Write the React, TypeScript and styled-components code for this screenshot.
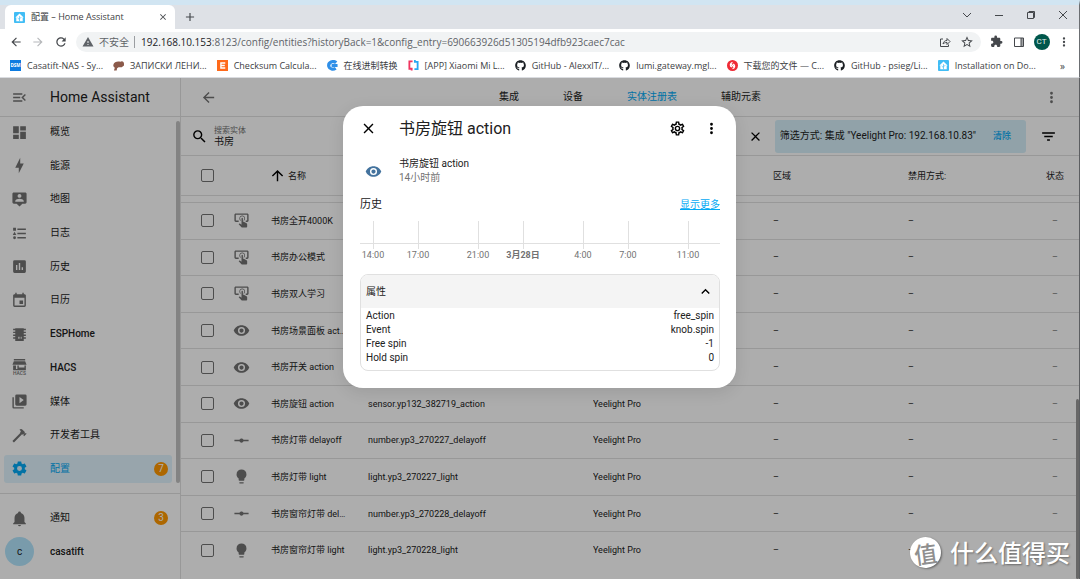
import React from 'react';
import styled, { createGlobalStyle } from 'styled-components';
import { FaGithub } from 'react-icons/fa';
import { MdExtension, MdWarning, MdStarOutline, MdRefresh } from 'react-icons/md';

const GlobalStyle = createGlobalStyle`
  *, *::before, *::after { box-sizing: border-box; }
  body { margin: 0; font-family: Roboto, "Noto Sans CJK SC", sans-serif; color: #212121; }
  button, input { font: inherit; color: inherit; }
  button { border: 0; padding: 0; background: none; cursor: pointer; }
  a { color: inherit; text-decoration: none; }
  ul { list-style: none; margin: 0; padding: 0; }
`;

const paths = {
  menuOpen: 'M21,15.61L19.59,17L14.58,12L19.59,7L21,8.39L17.44,12L21,15.61M3,6H16V8H3V6M3,13V11H13V13H3M3,18V16H16V18H3Z',
  dashboard: 'M13,3V9H21V3M13,21H21V11H13M3,21H11V15H3M3,13H11V3H3V13Z',
  bolt: 'M11 15H6L13 1V9H18L11 23V15Z',
  mapAccount: 'M20 2H4C2.9 2 2 2.9 2 4V16C2 17.1 2.9 18 4 18H8L12 22L16 18H20C21.1 18 22 17.1 22 16V4C22 2.9 21.1 2 20 2M12 4.3C13.5 4.3 14.7 5.5 14.7 7S13.5 9.7 12 9.7 9.3 8.5 9.3 7 10.5 4.3 12 4.3M18 15H6V14.1C6 12.1 10 11 12 11S18 12.1 18 14.1V15Z',
  list: 'M5,9.5L7.5,14H2.5L5,9.5M3,4H7V8H3V4M5,20A2,2 0 0,0 7,18A2,2 0 0,0 5,16A2,2 0 0,0 3,18A2,2 0 0,0 5,20M9,5V7H21V5H9M9,19H21V17H9V19M9,13H21V11H9V13Z',
  chart: 'M9 17H7V10H9M13 17H11V7H13M17 17H15V13H17M19 3H5A2 2 0 0 0 3 5V19A2 2 0 0 0 5 21H19A2 2 0 0 0 21 19V5A2 2 0 0 0 19 3Z',
  calendar: 'M19,19H5V8H19M16,1V3H8V1H6V3H5C3.89,3 3,3.89 3,5V19A2,2 0 0,0 5,21H19A2,2 0 0,0 21,19V5C21,3.89 20.1,3 19,3H18V1M17,12H12V17H17V12Z',
  chip: 'M6,3H18V4H21V6H18V8H21V10H18V12H21V14H18V16H21V18H18V21H6V18H3V16H6V14H3V12H6V10H3V8H6V6H3V4H6V3M10,15V18H11V15H10M12,15V18H13V15H12M14,15V18H15V15H14Z',
  hacs: 'M4,0H20V2H4ZM4,3H20L22,8H2ZM3,9H7V14H3ZM19,9H21V16H9V9H11V12H19V9ZM3,14H9V16H3Z',
  media: 'M4,6H2V20A2,2 0 0,0 4,22H18V20H4V6M20,2H8A2,2 0 0,0 6,4V16A2,2 0 0,0 8,18H20A2,2 0 0,0 22,16V4A2,2 0 0,0 20,2M12,14.5V5.5L18,10L12,14.5Z',
  hammer: 'M2,19.63L13.43,8.2L12.72,7.5L14.14,6.07L12,3.89C13.2,2.7 15.09,2.7 16.27,3.89L19.87,7.5L18.45,8.91H21.29L22,9.62L18.45,13.21L17.74,12.5V9.62L16.27,11.04L15.56,10.33L4.13,21.76L2,19.63Z',
  cog: 'M12,15.5A3.5,3.5 0 0,1 8.5,12A3.5,3.5 0 0,1 12,8.5A3.5,3.5 0 0,1 15.5,12A3.5,3.5 0 0,1 12,15.5M19.43,12.97C19.47,12.65 19.5,12.33 19.5,12C19.5,11.67 19.47,11.34 19.43,11L21.54,9.37C21.73,9.22 21.78,8.95 21.66,8.73L19.66,5.27C19.54,5.05 19.27,4.96 19.05,5.05L16.56,6.05C16.04,5.66 15.5,5.32 14.87,5.07L14.5,2.42C14.46,2.18 14.25,2 14,2H10C9.75,2 9.54,2.18 9.5,2.42L9.13,5.07C8.5,5.32 7.96,5.66 7.44,6.05L4.95,5.05C4.73,4.96 4.46,5.05 4.34,5.27L2.34,8.73C2.21,8.95 2.27,9.22 2.46,9.37L4.57,11C4.53,11.34 4.5,11.67 4.5,12C4.5,12.33 4.53,12.65 4.57,12.97L2.46,14.63C2.27,14.78 2.21,15.05 2.34,15.27L4.34,18.73C4.46,18.95 4.73,19.03 4.95,18.95L7.44,17.94C7.96,18.34 8.5,18.68 9.13,18.93L9.5,21.58C9.54,21.82 9.75,22 10,22H14C14.25,22 14.46,21.82 14.5,21.58L14.87,18.93C15.5,18.67 16.04,18.34 16.56,17.94L19.05,18.95C19.27,19.03 19.54,18.95 19.66,18.73L21.66,15.27C21.78,15.05 21.73,14.78 21.54,14.63L19.43,12.97Z',
  bell: 'M21,19V20H3V19L5,17V11C5,7.9 7.03,5.17 10,4.29C10,4.19 10,4.1 10,4A2,2 0 0,1 12,2A2,2 0 0,1 14,4C14,4.1 14,4.19 14,4.29C16.97,5.17 19,7.9 19,11V17L21,19M14,21A2,2 0 0,1 12,23A2,2 0 0,1 10,21',
  magnify: 'M9.5,3A6.5,6.5 0 0,1 16,9.5C16,11.11 15.41,12.59 14.44,13.73L14.71,14H15.5L20.5,19L19,20.5L14,15.5V14.71L13.73,14.44C12.59,15.41 11.11,16 9.5,16A6.5,6.5 0 0,1 3,9.5A6.5,6.5 0 0,1 9.5,3M9.5,5C7,5 5,7 5,9.5C5,12 7,14 9.5,14C12,14 14,12 14,9.5C14,7 12,5 9.5,5Z',
  arrowLeft: 'M20,11V13H8L13.5,18.5L12.08,19.92L4.16,12L12.08,4.08L13.5,5.5L8,11H20Z',
  arrowRight: 'M4,11V13H16L10.5,18.5L11.92,19.92L19.84,12L11.92,4.08L10.5,5.5L16,11H4Z',
  arrowUp: 'M13,20H11V8L5.5,13.5L4.08,12.08L12,4.16L19.92,12.08L18.5,13.5L13,8V20Z',
  dots: 'M12,16A2,2 0 0,1 14,18A2,2 0 0,1 12,20A2,2 0 0,1 10,18A2,2 0 0,1 12,16M12,10A2,2 0 0,1 14,12A2,2 0 0,1 12,14A2,2 0 0,1 10,12A2,2 0 0,1 12,10M12,4A2,2 0 0,1 14,6A2,2 0 0,1 12,8A2,2 0 0,1 10,6A2,2 0 0,1 12,4Z',
  close: 'M19,6.41L17.59,5L12,10.59L6.41,5L5,6.41L10.59,12L5,17.59L6.41,19L12,13.41L17.59,19L19,17.59L13.41,12L19,6.41Z',
  plus: 'M19,13H13V19H11V13H5V11H11V5H13V11H19V13Z',
  filter: 'M6,13H18V11H6M3,6V8H21V6M10,18H14V16H10V18Z',
  eye: 'M12,9A3,3 0 0,0 9,12A3,3 0 0,0 12,15A3,3 0 0,0 15,12A3,3 0 0,0 12,9M12,17A5,5 0 0,1 7,12A5,5 0 0,1 12,7A5,5 0 0,1 17,12A5,5 0 0,1 12,17M12,4.5C7,4.5 2.73,7.61 1,12C2.73,16.39 7,19.5 12,19.5C17,19.5 21.27,16.39 23,12C21.27,7.61 17,4.5 12,4.5Z',
  tap: 'M13 5C15.21 5 17 6.79 17 9C17 10.5 16.2 11.77 15 12.46V11.24C15.61 10.69 16 9.89 16 9C16 7.34 14.66 6 13 6S10 7.34 10 9C10 9.89 10.39 10.69 11 11.24V12.46C9.8 11.77 9 10.5 9 9C9 6.79 10.79 5 13 5M20 20.5C19.97 21.32 19.32 21.97 18.5 22H13C12.62 22 12.26 21.85 12 21.57L8 17.37L8.74 16.6C8.93 16.39 9.2 16.28 9.5 16.28H9.7L12 18V9C12 8.45 12.45 8 13 8S14 8.45 14 9V13.47L15.21 13.6L19.15 15.79C19.68 16.03 20 16.56 20 17.14V20.5M20 2H4C2.9 2 2 2.9 2 4V12C2 13.11 2.9 14 4 14H8V12L4 12L4 4H20L20 12H18V14H20V13.99L20.04 14C21.13 14 22 13.09 22 12V4C22 2.9 21.1 2 20 2Z',
  ray: 'M2,11H9.17C9.58,9.83 10.69,9 12,9C13.31,9 14.42,9.83 14.83,11H22V13H14.83C14.42,14.17 13.31,15 12,15C10.69,15 9.58,14.17 9.17,13H2V11Z',
  bulb: 'M12,2A7,7 0 0,0 5,9C5,11.38 6.19,13.47 8,14.74V17A1,1 0 0,0 9,18H15A1,1 0 0,0 16,17V14.74C17.81,13.47 19,11.38 19,9A7,7 0 0,0 12,2M9,21A1,1 0 0,0 10,22H14A1,1 0 0,0 15,21V20H9V21Z',
  cogOutline: 'M12,8A4,4 0 0,1 16,12A4,4 0 0,1 12,16A4,4 0 0,1 8,12A4,4 0 0,1 12,8M12,10A2,2 0 0,0 10,12A2,2 0 0,0 12,14A2,2 0 0,0 14,12A2,2 0 0,0 12,10M10,22C9.75,22 9.54,21.82 9.5,21.58L9.13,18.93C8.5,18.68 7.96,18.34 7.44,17.94L4.95,18.95C4.73,19.03 4.46,18.95 4.34,18.73L2.34,15.27C2.21,15.05 2.27,14.78 2.46,14.63L4.57,12.97L4.5,12L4.57,11L2.46,9.37C2.27,9.22 2.21,8.95 2.34,8.73L4.34,5.27C4.46,5.05 4.73,4.96 4.95,5.05L7.44,6.05C7.96,5.66 8.5,5.32 9.13,5.07L9.5,2.42C9.54,2.18 9.75,2 10,2H14C14.25,2 14.46,2.18 14.5,2.42L14.87,5.07C15.5,5.32 16.04,5.66 16.56,6.05L19.05,5.05C19.27,4.96 19.54,5.05 19.66,5.27L21.66,8.73C21.79,8.95 21.73,9.22 21.54,9.37L19.43,11L19.5,12L19.43,13L21.54,14.63C21.73,14.78 21.79,15.05 21.66,15.27L19.66,18.73C19.54,18.95 19.27,19.04 19.05,18.95L16.56,17.95C16.04,18.34 15.5,18.68 14.87,18.93L14.5,21.58C14.46,21.82 14.25,22 14,22H10M11.25,4L10.88,6.61C9.68,6.86 8.62,7.5 7.85,8.39L5.44,7.35L4.69,8.65L6.8,10.2C6.4,11.37 6.4,12.64 6.8,13.8L4.68,15.36L5.43,16.66L7.86,15.62C8.63,16.5 9.68,17.14 10.87,17.38L11.24,20H12.76L13.13,17.39C14.32,17.14 15.37,16.5 16.14,15.62L18.57,16.66L19.32,15.36L17.2,13.81C17.6,12.64 17.6,11.37 17.2,10.2L19.31,8.65L18.56,7.35L16.15,8.39C15.38,7.5 14.32,6.86 13.12,6.62L12.75,4H11.25Z',
  chevronUp: 'M7.41,15.41L12,10.83L16.59,15.41L18,14L12,8L6,14L7.41,15.41Z',
};
type IconName = keyof typeof paths;

const Svg = styled.svg<{ $size: number }>`
  display: block;
  flex: none;
  width: ${(p) => p.$size}px;
  height: ${(p) => p.$size}px;
  fill: currentColor;
  fill-rule: evenodd;
`;

const Icon = ({ name, size = 17 }: { name: IconName; size?: number }) => (
  <Svg $size={size} viewBox="0 0 24 24" aria-hidden="true">
    <path d={paths[name]} />
    {name === 'hacs' && (
      <text x="12" y="23" fontSize="7" fontWeight="500" textAnchor="middle">HACS</text>
    )}
  </Svg>
);

/* ---------- browser frame ---------- */

const Page = styled.div`
  position: relative;
  display: flex;
  flex-direction: column;
  min-height: 100vh;
  background: #fff;
`;

const Browser = styled.header`
  flex: none;
  font-family: "Open Sans", "Noto Sans CJK SC", sans-serif;
  line-height: 14px;
  color: #3c4043;
  background: #fff;
  border-top: 5px solid #d1e5f2;
  border-right: 1px solid #6b6e72;
  border-bottom: 1px solid #dadce0;
`;

const TabStrip = styled.div`
  display: flex;
  align-items: center;
  height: 24px;
  padding-left: 5px;
  background: #dee1e6;
`;

const BrowserTab = styled.div`
  display: flex;
  align-items: center;
  gap: 6px;
  width: 170px;
  height: 24px;
  padding: 0 6px 0 9px;
  border-radius: 6px 6px 0 0;
  background: #fff;
  font-size: 9px;
  white-space: nowrap;
`;

const TabTitle = styled.span`
  flex: 1;
`;

const FrameButton = styled.button<{ $width?: number; $faded?: boolean }>`
  display: flex;
  align-items: center;
  justify-content: center;
  flex: none;
  width: ${(p) => p.$width ?? 12}px;
  height: 20px;
  color: ${(p) => (p.$faded ? '#b6b8bb' : '#45484c')};
`;

const WindowButtons = styled.div`
  display: flex;
  margin-left: auto;
  height: 24px;
`;

const Toolbar = styled.div`
  display: flex;
  align-items: center;
  height: 25px;
  padding: 0 5px 0 4px;
`;

const AddressBar = styled.div`
  display: flex;
  align-items: center;
  flex: 1;
  min-width: 0;
  height: 20px;
  margin: 0 4px;
  padding: 0 3px 0 6px;
  border-radius: 10px;
  background: #f1f3f4;
  font-size: 10px;
  color: #5f6368;
`;

const Insecure = styled.span`
  flex: none;
  margin: 0 6px 0 5px;
  padding-right: 5px;
  border-right: 1px solid #9a9da1;
  line-height: 12px;
`;

const Url = styled.span`
  flex: 1;
  overflow: hidden;
  white-space: nowrap;
  b { font-weight: 400; color: #202124; }
`;

const Avatar = styled.span`
  display: flex;
  align-items: center;
  justify-content: center;
  width: 16px;
  height: 16px;
  border-radius: 50%;
  background: #00574b;
  color: #e5efed;
  font: 8px Roboto, sans-serif;
`;

const Bookmarks = styled.nav`
  display: flex;
  align-items: center;
  gap: 10px;
  height: 23px;
  padding: 0 14px 0 10px;
  overflow: hidden;
`;

const Bookmark = styled.a`
  display: flex;
  align-items: center;
  flex: none;
  gap: 6px;
  font-size: 9px;
  white-space: nowrap;
`;

const More = styled.button`
  margin-left: auto;
  font-size: 10px;
  line-height: 14px;
`;

const Favicon = ({ kind }: { kind: string }) => (
  <Svg $size={11} viewBox="0 0 24 24" aria-hidden="true">
    {kind === 'dsm' && (
      <>
        <rect width="24" height="24" fill="#0c7be0" />
        <text x="12" y="16" fontSize="10" fontWeight="700" textAnchor="middle" fill="#fff">DSM</text>
      </>
    )}
    {kind === 'brown' && <path fill="#8b5a4a" d="M1 10C2 3 12 2 16 4C20 1 24 4 24 8V12L19 16H12L9 18L8 23H2L4 17C1 15 0 13 1 10Z" />}
    {kind === 'e' && (
      <>
        <rect width="24" height="24" fill="#ff6a1a" />
        <path fill="#fff" d="M7 5H18V8H10V10.500H17V13.500H10V16H18V19H7Z" />
      </>
    )}
    {kind === 'c' && (
      <path fill="none" stroke="#2f8fe8" strokeWidth="7" d="M20 6C17 3 13 3 10 4C5 6 3 10 4 14C6 20 13 22 19 18M10 12H23" />
    )}
    {kind === 'app' && (
      <>
        <path fill="none" stroke="#f0355f" strokeWidth="4" d="M10 3H3V19H8V23" />
        <path fill="none" stroke="#2aa8f2" strokeWidth="4" d="M14 20H21V4H15V0" />
      </>
    )}
    {kind === 'red' && (
      <>
        <circle cx="12" cy="12" r="12" fill="#ef2b36" />
        <path fill="none" stroke="#fff" strokeWidth="3" d="M12 5C6 7 6 14 11 15M12 19C18 17 18 10 13 9M9 9L15 15" />
      </>
    )}
    {kind === 'ha' && (
      <>
        <rect width="24" height="24" rx="2" fill="#41bdf5" />
        <path fill="#fff" d="M12 3L21 12H19V20H5V12H3Z" />
        <path fill="none" stroke="#41bdf5" strokeWidth="1.500" d="M12 20V9M12 17L8 13M12 15L16 11" />
      </>
    )}
  </Svg>
);

const bookmarks = [
  ['dsm', 'Casatift-NAS - Sy...'],
  ['brown', 'ЗАПИСКИ ЛЕНИ...'],
  ['e', 'Checksum Calcula...'],
  ['c', '在线进制转换'],
  ['app', '[APP] Xiaomi Mi L...'],
  ['github', 'GitHub - AlexxIT/...'],
  ['github', 'lumi.gateway.mgl...'],
  ['red', '下载您的文件 — C...'],
  ['github', 'GitHub - psieg/Li...'],
  ['ha', 'Installation on Do...'],
];

const Line = ({ d, size = 12, w = 1 }: { d: string; size?: number; w?: number }) => (
  <Svg $size={size} viewBox="0 0 12 12" aria-hidden="true">
    <path d={d} fill="none" stroke="currentColor" strokeWidth={w} />
  </Svg>
);

const BrowserFrame = () => (
  <Browser>
    <TabStrip>
      <BrowserTab>
        <Favicon kind="ha" />
        <TabTitle>配置 – Home Assistant</TabTitle>
        <FrameButton aria-label="关闭标签页"><Icon name="close" size={10} /></FrameButton>
      </BrowserTab>
      <FrameButton $width={30} aria-label="新标签页"><Icon name="plus" size={14} /></FrameButton>
      <WindowButtons>
        <FrameButton $width={32} aria-label="搜索标签页"><Line d="M2 4L6 8L10 4" /></FrameButton>
        <FrameButton $width={32} aria-label="最小化"><Line d="M2 6.500H10" /></FrameButton>
        <FrameButton $width={32} aria-label="还原"><Line d="M2.500 3.500H8.500V9.500H2.500ZM4 3.500V2.500H9.500V8.500H8.500" /></FrameButton>
        <FrameButton $width={32} aria-label="关闭"><Line d="M2 2L10 10M10 2L2 10" /></FrameButton>
      </WindowButtons>
    </TabStrip>
    <Toolbar>
      <FrameButton $width={23} aria-label="后退"><Icon name="arrowLeft" size={14} /></FrameButton>
      <FrameButton $width={22} $faded aria-label="前进"><Icon name="arrowRight" size={14} /></FrameButton>
      <FrameButton $width={23} aria-label="重新加载"><MdRefresh size={14} /></FrameButton>
      <AddressBar>
        <MdWarning size={12} />
        <Insecure>不安全</Insecure>
        <Url><b>192.168.10.153</b>:8123/config/entities?historyBack=1&amp;config_entry=690663926d51305194dfb923caec7cac</Url>
        <FrameButton $width={22} aria-label="分享">
          <Line d="M4 3H1.500V10.500H9.500V8.500M4 8C4.500 5.500 6 4.500 8 4.500V2.500L11 5.500L8 8.500V6.500C6 6.500 5 7 4 8Z" />
        </FrameButton>
        <FrameButton $width={22} aria-label="收藏"><MdStarOutline size={14} /></FrameButton>
      </AddressBar>
      <FrameButton $width={23} aria-label="扩展程序"><MdExtension size={13} /></FrameButton>
      <FrameButton $width={22} aria-label="侧边栏">
        <Line d="M1.500 2H10.500V10.500H1.500ZM8 2V10M9 2V10" />
      </FrameButton>
      <FrameButton $width={23} aria-label="用户"><Avatar>CT</Avatar></FrameButton>
      <FrameButton $width={21} aria-label="菜单"><Icon name="dots" size={14} /></FrameButton>
    </Toolbar>
    <Bookmarks>
      {bookmarks.map(([kind, label]) => (
        <Bookmark href="#" key={label}>
          {kind === 'github' ? <FaGithub size={11} color="#1b1f23" /> : <Favicon kind={kind} />}
          {label}
        </Bookmark>
      ))}
      <More aria-label="更多书签">»</More>
    </Bookmarks>
  </Browser>
);

/* ---------- Home Assistant ---------- */

const Application = styled.div`
  position: relative;
  display: flex;
  flex: 1;
  border-right: 1px solid #5c5e61;
  font-size: 10px;
  line-height: 14px;
`;

const Sidebar = styled.aside`
  display: flex;
  flex-direction: column;
  flex: none;
  width: 181px;
  border-right: 1px solid #e0e0e0;
`;

const SidebarHeader = styled.div`
  display: flex;
  align-items: center;
  gap: 22px;
  height: 39px;
  padding-left: 11px;
  border-bottom: 1px solid #e0e0e0;
  font-size: 14px;
  color: #212121;
`;

const IconButton = styled.button<{ $size?: number; $color?: string }>`
  display: flex;
  align-items: center;
  justify-content: center;
  flex: none;
  width: ${(p) => p.$size ?? 17}px;
  height: ${(p) => p.$size ?? 17}px;
  color: ${(p) => p.$color ?? '#727272'};
`;

const NavList = styled.ul`
  position: relative;
  display: flex;
  flex-direction: column;
  justify-content: space-between;
  flex: 1;
  padding: 1px 8px 10px 4px;
`;

const NavScrollbar = styled.span`
  position: absolute;
  top: 4px;
  right: 0;
  bottom: 10px;
  width: 4px;
  border-radius: 2px;
  background: #c1c1c1;
`;

const NavLink = styled.a<{ $active?: boolean; $latin?: boolean }>`
  display: flex;
  align-items: center;
  gap: 22px;
  height: 28px;
  padding: 0 4px 0 7px;
  border-radius: 3px;
  font-weight: ${(p) => (p.$latin ? 500 : 400)};
  color: ${(p) => (p.$active ? '#03a9f4' : '#212121')};
  background: ${(p) => (p.$active ? '#e0f4fe' : 'transparent')};
  svg { color: ${(p) => (p.$active ? '#03a9f4' : '#727272')}; }
`;

const Badge = styled.span`
  display: flex;
  align-items: center;
  justify-content: center;
  width: 14px;
  height: 14px;
  margin-left: auto;
  border-radius: 50%;
  background: #ff9800;
  color: #fff;
`;

const SidebarFooter = styled.div`
  display: flex;
  flex-direction: column;
  gap: 5px;
  height: 86px;
  padding: 10px 8px 0 4px;
  border-top: 1px solid #e0e0e0;
`;

const UserLink = styled.a`
  display: flex;
  align-items: center;
  gap: 16px;
  padding-left: 1px;
  font-weight: 500;
`;

const UserBadge = styled.span`
  display: flex;
  align-items: center;
  justify-content: center;
  width: 29px;
  height: 29px;
  border-radius: 50%;
  background: #b3e5fc;
  font-weight: 400;
`;

const nav: [IconName, string, number?][] = [
  ['dashboard', '概览'],
  ['bolt', '能源'],
  ['mapAccount', '地图'],
  ['list', '日志'],
  ['chart', '历史'],
  ['calendar', '日历'],
  ['chip', 'ESPHome'],
  ['hacs', 'HACS'],
  ['media', '媒体'],
  ['hammer', '开发者工具'],
  ['cog', '配置', 7],
];

const Main = styled.main`
  position: relative;
  display: flex;
  flex-direction: column;
  flex: 1;
  min-width: 0;
  padding-bottom: 11px;
`;

const MainHeader = styled.div`
  display: flex;
  align-items: center;
  justify-content: space-between;
  height: 39px;
  padding: 0 19px;
  border-bottom: 1px solid #e0e0e0;
`;

const Tabs = styled.nav`
  display: flex;
`;

const Tab = styled.a<{ $active?: boolean }>`
  padding: 0 22px;
  color: ${(p) => (p.$active ? '#03a9f4' : '#212121')};
`;

const SearchRow = styled.div`
  display: flex;
  align-items: center;
  height: 39px;
  padding: 0 22px 0 10px;
  border-bottom: 1px solid #e0e0e0;
  color: #000;
`;

const SearchField = styled.label`
  display: flex;
  flex-direction: column;
  flex: 1;
  margin-left: 6px;
  font-size: 8px;
  line-height: 9px;
  color: #727272;
`;

const SearchInput = styled.input`
  width: 100%;
  height: 12px;
  padding: 0;
  border: 0;
  outline: 0;
  background: none;
  font-size: 10px;
  color: #212121;
`;

const FilterChip = styled.div`
  display: flex;
  align-items: center;
  height: 33px;
  margin: 0 14px 0 11px;
  padding: 0 15px 0 5px;
  border-radius: 3px;
  background: #d6eff9;
  color: #212121;
  white-space: nowrap;
`;

const ClearButton = styled.button`
  margin-left: 17px;
  font-size: 9px;
  font-weight: 500;
  color: #03a9f4;
`;

const Table = styled.table`
  display: flex;
  flex-direction: column;
  flex: 1;
  font-size: 9px;
  thead { display: block; margin-bottom: 6px; }
  tbody { display: grid; flex: 1; grid-auto-rows: 1fr; }
  th { font-weight: 400; text-align: left; }
`;

const Row = styled.tr<{ $head?: boolean }>`
  display: grid;
  grid-template-columns: 52px 38px minmax(0, 97fr) minmax(0, 225fr) minmax(0, 180fr) minmax(0, 135fr) minmax(0, 123fr) 48px;
  align-items: center;
  height: ${(p) => (p.$head ? '40px' : 'auto')};
  border-top: ${(p) => (p.$head ? '0' : '1px solid #e0e0e0')};
  border-bottom: ${(p) => (p.$head ? '1px solid #e0e0e0' : '0')};
  th, td {
    padding: 0;
    overflow: hidden;
    text-overflow: ellipsis;
    white-space: nowrap;
  }
  th:nth-child(1), td:nth-child(1) { padding-left: 20px; }
  th:nth-child(3) { overflow: visible; }
  td:nth-child(3) { padding-right: 21px; }
  th:last-child, td:last-child { text-align: center; }
  td:last-child { color: #727272; }
  td svg { color: #727272; }
`;

const SortLabel = styled.span`
  display: flex;
  align-items: center;
  gap: 2px;
  margin-left: -2px;
  svg { color: #000; }
`;

const Check = styled.input`
  display: block;
  appearance: none;
  width: 13px;
  height: 13px;
  margin: 0;
  border: 1px solid #727272;
  border-radius: 2px;
`;

const PageScrollbar = styled.span`
  position: absolute;
  right: 0;
  bottom: 0;
  width: 3px;
  height: 36%;
  border-radius: 2px;
  background: #999;
`;

type Entity = { icon: IconName; name: string; id?: string; integration?: string; state?: string };

const rows: Entity[] = [
  { icon: 'tap', name: '书房全开4000K', state: '–' },
  { icon: 'tap', name: '书房办公模式', state: '–' },
  { icon: 'tap', name: '书房双人学习', state: '–' },
  { icon: 'eye', name: '书房场景面板 action', state: '–' },
  { icon: 'eye', name: '书房开关 action', state: '–' },
  { icon: 'eye', name: '书房旋钮 action', id: 'sensor.yp132_382719_action', integration: 'Yeelight Pro', state: '–' },
  { icon: 'ray', name: '书房灯带 delayoff', id: 'number.yp3_270227_delayoff', integration: 'Yeelight Pro', state: '–' },
  { icon: 'bulb', name: '书房灯带 light', id: 'light.yp3_270227_light', integration: 'Yeelight Pro', state: '–' },
  { icon: 'ray', name: '书房窗帘灯带 delayoff', id: 'number.yp3_270228_delayoff', integration: 'Yeelight Pro', state: '–' },
  { icon: 'bulb', name: '书房窗帘灯带 light', id: 'light.yp3_270228_light', integration: 'Yeelight Pro' },
];

/* ---------- more-info dialog ---------- */

const Scrim = styled.div`
  position: absolute;
  inset: 0;
  display: flex;
  align-items: flex-start;
  justify-content: center;
  padding-top: 28px;
  background: rgba(0, 0, 0, 0.32);
`;

const Dialog = styled.section`
  width: 393px;
  padding: 0 16px 17px 17px;
  border-radius: 20px;
  background: #fff;
  box-shadow: 0 4px 16px rgba(0, 0, 0, 0.1);
`;

const DialogHeader = styled.div`
  display: flex;
  align-items: center;
  gap: 17px;
  height: 45px;
  color: #212121;
`;

const DialogTitle = styled.h1`
  flex: 1;
  margin: 0 0 0 5px;
  font-size: 16px;
  font-weight: 400;
  line-height: 20px;
`;

const StateRow = styled.div`
  display: flex;
  align-items: center;
  gap: 17px;
  height: 40px;
  padding-left: 5px;
  svg { color: #44739e; }
`;

const Ago = styled.div`
  color: #727272;
`;

const HistoryHeader = styled.div`
  display: flex;
  align-items: center;
  justify-content: space-between;
  height: 16px;
  margin: 6px 0 8px;
`;

const HistoryTitle = styled.h2`
  margin: 0;
  font-size: 11px;
  font-weight: 400;
`;

const MoreLink = styled.a`
  color: #03a9f4;
  text-decoration: underline;
`;

const Timeline = styled.svg`
  display: block;
  width: 100%;
  height: 43px;
  font-size: 9px;
  text-anchor: middle;
  fill: #727272;
`;

const Attributes = styled.div`
  margin-top: 10px;
  border: 1px solid #e0e0e0;
  border-radius: 8px;
  overflow: hidden;
`;

const AttributesHeader = styled.button`
  display: flex;
  align-items: center;
  justify-content: space-between;
  width: 100%;
  height: 33px;
  padding: 0 5px;
  background: #f4f4f4;
  svg { color: #000; }
`;

const AttributeList = styled.dl`
  margin: 0;
  padding: 1px 5px 5px;
  div { display: flex; justify-content: space-between; }
  dd { margin: 0; }
`;

const ticks: [number, string][] = [
  [13, '14:00'],
  [58, '17:00'],
  [118, '21:00'],
  [163, '3月28日'],
  [223, '4:00'],
  [268, '7:00'],
  [328, '11:00'],
];

const attributes = [
  ['Action', 'free_spin'],
  ['Event', 'knob.spin'],
  ['Free spin', '-1'],
  ['Hold spin', '0'],
];

const MoreInfoDialog = () => (
  <Dialog role="dialog" aria-label="书房旋钮 action">
    <DialogHeader>
      <IconButton $color="#000" aria-label="关闭"><Icon name="close" /></IconButton>
      <DialogTitle>书房旋钮 action</DialogTitle>
      <IconButton $color="#000" aria-label="设置"><Icon name="cogOutline" /></IconButton>
      <IconButton $color="#000" aria-label="更多"><Icon name="dots" /></IconButton>
    </DialogHeader>
    <StateRow>
      <Icon name="eye" />
      <div>
        <div>书房旋钮 action</div>
        <Ago>14小时前</Ago>
      </div>
    </StateRow>
    <HistoryHeader>
      <HistoryTitle>历史</HistoryTitle>
      <MoreLink href="#">显示更多</MoreLink>
    </HistoryHeader>
    <Timeline viewBox="0 0 360 43">
      <rect x="0" y="22" width="360" height="1" fill="#e0e0e0" />
      {ticks.map(([x, label]) => (
        <g key={label}>
          <rect x={x} y="0" width="1" height="28" fill="#e0e0e0" />
          <text x={x} y="37" fontWeight={label === '3月28日' ? 700 : 400}>{label}</text>
        </g>
      ))}
    </Timeline>
    <Attributes>
      <AttributesHeader>属性<Icon name="chevronUp" /></AttributesHeader>
      <AttributeList>
        {attributes.map(([k, v]) => (
          <div key={k}><dt>{k}</dt><dd>{v}</dd></div>
        ))}
      </AttributeList>
    </Attributes>
  </Dialog>
);

/* ---------- watermark ---------- */

const Watermark = styled.div`
  position: absolute;
  right: 10px;
  bottom: 10px;
  display: flex;
  align-items: center;
  gap: 9px;
  font: 500 24px/34px "Noto Sans CJK SC", sans-serif;
  color: #fff;
  text-shadow: 1px 1px 2px rgba(0, 0, 0, 0.4);
`;

const Seal = styled.span`
  display: flex;
  align-items: center;
  justify-content: center;
  width: 31px;
  height: 31px;
  border-radius: 50%;
  background: #fff;
  box-shadow: 1px 1px 2px rgba(0, 0, 0, 0.4);
  color: #8f8f8f;
  font-size: 23px;
  text-shadow: none;
  transform: rotate(-8deg);
`;

export default function App() {
  return (
    <Page>
      <GlobalStyle />
      <BrowserFrame />
      <Application>
        <Sidebar>
          <SidebarHeader>
            <IconButton aria-label="收起侧边栏"><Icon name="menuOpen" /></IconButton>
            Home Assistant
          </SidebarHeader>
          <NavList>
            {nav.map(([icon, label, count]) => (
              <li key={label}>
                <NavLink href="#" $active={label === '配置'} $latin={/^[A-Z]/.test(label)}>
                  <Icon name={icon} />
                  {label}
                  {count && <Badge>{count}</Badge>}
                </NavLink>
              </li>
            ))}
            <NavScrollbar as="li" aria-hidden="true" />
          </NavList>
          <SidebarFooter>
            <NavLink href="#"><Icon name="bell" />通知<Badge>3</Badge></NavLink>
            <UserLink href="#"><UserBadge>c</UserBadge>casatift</UserLink>
          </SidebarFooter>
        </Sidebar>
        <Main>
          <MainHeader>
            <IconButton aria-label="返回"><Icon name="arrowLeft" /></IconButton>
            <Tabs>
              <Tab href="#">集成</Tab>
              <Tab href="#">设备</Tab>
              <Tab href="#" $active>实体注册表</Tab>
              <Tab href="#">辅助元素</Tab>
            </Tabs>
            <IconButton aria-label="更多"><Icon name="dots" /></IconButton>
          </MainHeader>
          <SearchRow>
            <Icon name="magnify" />
            <SearchField>
              搜索实体
              <SearchInput defaultValue="书房" />
            </SearchField>
            <IconButton $color="#000" aria-label="清空"><Icon name="close" size={15} /></IconButton>
            <FilterChip>
              筛选方式: 集成 "Yeelight Pro: 192.168.10.83"
              <ClearButton>清除</ClearButton>
            </FilterChip>
            <IconButton $color="#000" aria-label="筛选"><Icon name="filter" /></IconButton>
          </SearchRow>
          <Table>
            <thead>
              <Row $head>
                <th><Check type="checkbox" aria-label="全选" /></th>
                <th />
                <th><SortLabel><Icon name="arrowUp" />名称</SortLabel></th>
                <th />
                <th />
                <th>区域</th>
                <th>禁用方式:</th>
                <th>状态</th>
              </Row>
            </thead>
            <tbody>
              {rows.map(({ icon, name, id, integration, state }) => (
                <Row key={name}>
                  <td><Check type="checkbox" aria-label={name} /></td>
                  <td><Icon name={icon} /></td>
                  <td>{name}</td>
                  <td>{id}</td>
                  <td>{integration}</td>
                  <td>–</td>
                  <td>–</td>
                  <td>{state}</td>
                </Row>
              ))}
            </tbody>
          </Table>
          <PageScrollbar />
        </Main>
        <Scrim>
          <MoreInfoDialog />
        </Scrim>
      </Application>
      <Watermark><Seal>值</Seal>什么值得买</Watermark>
    </Page>
  );
}
